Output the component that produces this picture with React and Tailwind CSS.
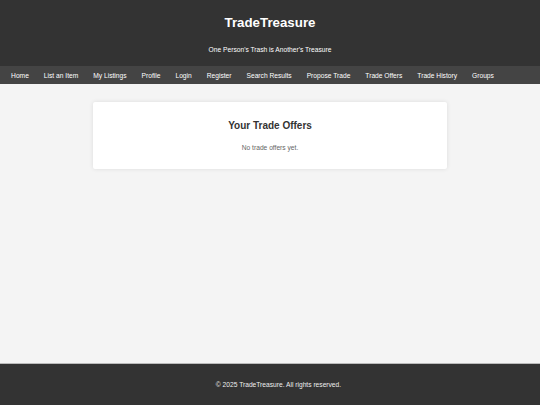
const links = [
  "Home",
  "List an Item",
  "My Listings",
  "Profile",
  "Login",
  "Register",
  "Search Results",
  "Propose Trade",
  "Trade Offers",
  "Trade History",
  "Groups",
]

export default function App() {
  return (
    <div className="min-h-screen flex flex-col bg-[#f4f4f4] font-['Liberation_Sans',Arial,sans-serif]">
      {/* header */}
      <header className="bg-[#333] text-white text-center h-[66px] pt-[15px]">
        <h1 className="text-[13.3px] leading-[16px] font-bold">TradeTreasure</h1>
        <p className="text-[6.67px] leading-[8px] mt-[14.5px]">One Person's Trash is Another's Treasure</p>
      </header>

      <nav className="bg-[#444] h-[18px] flex items-center pl-[3.6px] pt-[1px]">
        {links.map((l) => (
          <a key={l} href="#" className="px-[7.5px] text-[6.67px] leading-[8px] text-white whitespace-nowrap">
            {l}
          </a>
        ))}
      </nav>

      <main className="flex-1 pt-[18px]">
        <div className="mx-auto w-[354px] h-[67px] bg-white rounded-[2px] shadow-[0_0_4px_rgba(0,0,0,0.1)] text-center pt-[18px]">
          <h2 className="text-[10px] leading-[12px] font-bold text-[#333]">Your Trade Offers</h2>
          <p className="text-[6.67px] leading-[8px] mt-[12px] text-[#666]">No trade offers yet.</p>
        </div>
      </main>

      <footer className="bg-[#333] border-t border-[#bbb] h-[42px] flex items-center justify-center pl-[17px]">
        <p className="text-[6.67px] leading-[8px] text-[#eee]">© 2025 TradeTreasure. All rights reserved.</p>
      </footer>
    </div>
  )
}
